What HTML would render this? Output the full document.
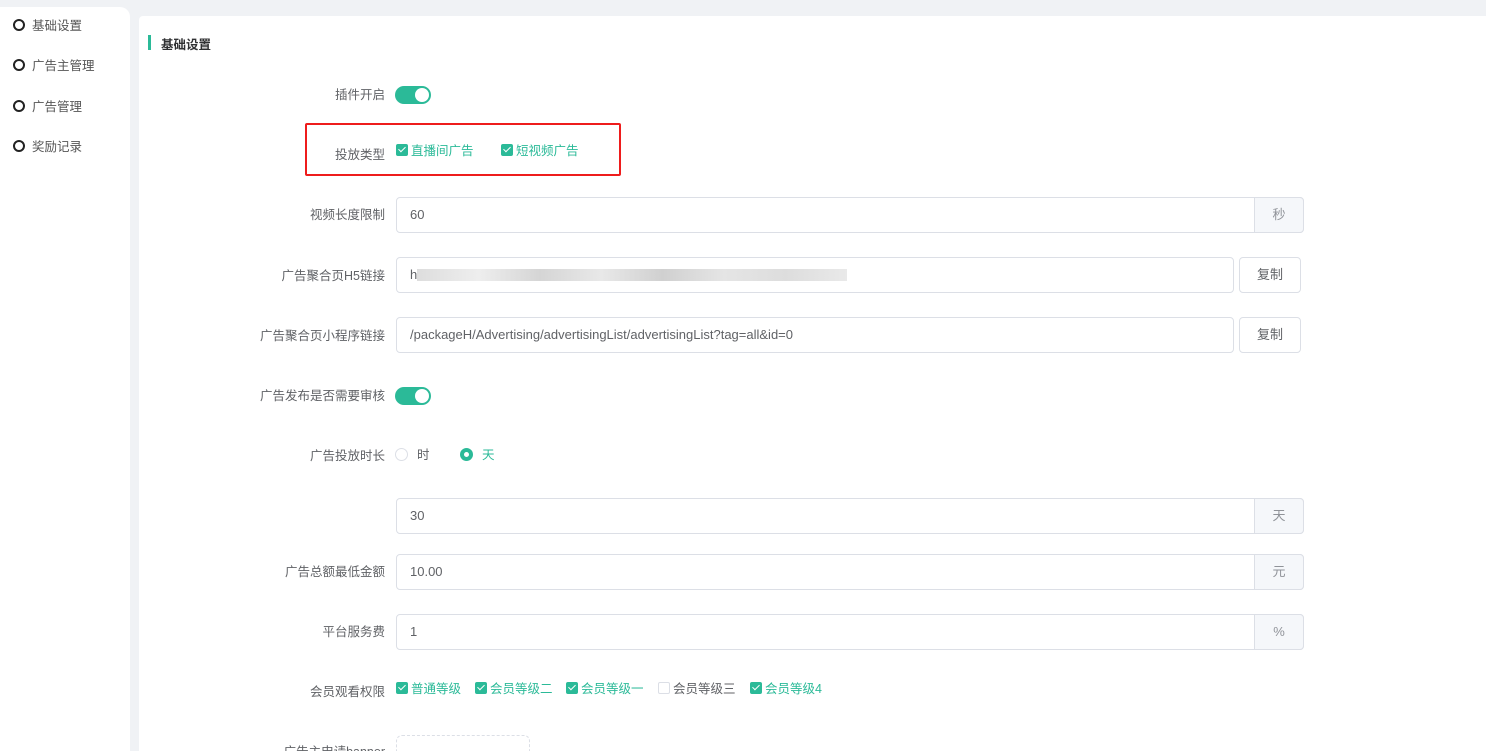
<!DOCTYPE html>
<html style="overflow:hidden;width:1486px;height:751px"><head><meta charset="utf-8"><style>
*{box-sizing:border-box;margin:0;padding:0}
body{width:1486px;height:751px;overflow:hidden;background:#f0f2f5;font-family:"Liberation Sans","Noto Sans CJK SC",sans-serif;font-size:13px;color:#606266;position:relative}
.side{position:absolute;left:0;top:7px;width:130px;height:744px;background:#fff;border-top-right-radius:10px}
.side div{position:absolute;left:13px;color:#555;font-size:12.5px}
.side div:before{content:"";display:inline-block;width:8px;height:8px;border:2px solid #222;border-radius:50%;margin-right:7px;vertical-align:-1px}
.card{position:absolute;left:139px;top:16px;width:1347px;height:735px;background:#fff;border-top-left-radius:4px}
.ab{position:absolute}
.lbl{position:absolute;right:1101px;font-size:12.5px;color:#606266;white-space:nowrap}
.inp{position:absolute;left:396px;height:36px;border:1px solid #dcdfe6;border-radius:4px;padding-left:13px;line-height:34px;color:#606266;font-size:13px}
.app{position:absolute;right:-1px;top:-1px;width:50px;height:36px;background:#f5f7fa;border:1px solid #dcdfe6;border-radius:0 4px 4px 0;text-align:center;line-height:34px;color:#909399}
.btn{position:absolute;left:1239px;width:62px;height:36px;border:1px solid #dcdfe6;border-radius:4px;text-align:center;line-height:34px;color:#606266}
.sw{position:absolute;left:395px;width:36px;height:18px;border-radius:9px;background:#2bba98}
.sw:after{content:"";position:absolute;right:2px;top:2px;width:14px;height:14px;border-radius:50%;background:#fff}
.cb{position:absolute;font-size:12.5px;color:#2bba98;white-space:nowrap}
.cb i{display:inline-block;width:12px;height:12px;background:#2bba98;border-radius:2px;margin-right:3px;vertical-align:-1px;position:relative}
.cb i:after{content:"";position:absolute;left:3.5px;top:1px;width:3px;height:6px;border:solid #fff;border-width:0 1.5px 1.5px 0;transform:rotate(45deg)}
.cb.off{color:#606266}.cb.off i{background:#fff;border:1px solid #dcdfe6}.cb.off i:after{display:none}
</style></head><body>
<div class="side">
<div style="top:8px">基础设置</div>
<div style="top:48px">广告主管理</div>
<div style="top:89px">广告管理</div>
<div style="top:129px">奖励记录</div>
</div>
<div class="card"></div>
<div class="ab" style="left:148px;top:35px;width:3px;height:15px;background:#2bba98"></div>
<div class="ab" style="left:161px;top:34px;font-size:12.5px;font-weight:bold;color:#303133">基础设置</div>

<div class="lbl" style="top:84px">插件开启</div><div class="sw" style="top:86px"></div>

<div class="ab" style="left:305px;top:123px;width:316px;height:53px;border:2px solid #ee1c1c;border-radius:2px"></div>
<div class="lbl" style="top:144px">投放类型</div>
<div class="cb" style="left:396px;top:140px"><i></i>直播间广告</div>
<div class="cb" style="left:501px;top:140px"><i></i>短视频广告</div>

<div class="lbl" style="top:204px">视频长度限制</div>
<div class="inp" style="top:197px;width:908px">60<div class="app">秒</div></div>

<div class="lbl" style="top:265px">广告聚合页H5链接</div>
<div class="inp" style="top:257px;width:838px">h<span class="ab" style="left:20px;top:11px;width:430px;height:12px;background:linear-gradient(90deg,#ddd,#eee,#d5d5d5,#e8e8e8,#d0d0d0,#e5e5e5,#ddd,#e9e9e9)"></span></div>
<div class="btn" style="top:257px">复制</div>

<div class="lbl" style="top:325px">广告聚合页小程序链接</div>
<div class="inp" style="top:317px;width:838px">/packageH/Advertising/advertisingList/advertisingList?tag=all&amp;id=0</div>
<div class="btn" style="top:317px">复制</div>

<div class="lbl" style="top:385px">广告发布是否需要审核</div><div class="sw" style="top:387px"></div>

<div class="lbl" style="top:445px">广告投放时长</div>
<div class="ab" style="left:395px;top:448px;width:13px;height:13px;border:1px solid #dcdfe6;border-radius:50%"></div>
<div class="ab" style="left:417px;top:444px;font-size:12.5px">时</div>
<div class="ab" style="left:460px;top:448px;width:13px;height:13px;border:4px solid #2bba98;border-radius:50%;background:#fff"></div>
<div class="ab" style="left:482px;top:444px;color:#2bba98;font-size:12.5px">天</div>

<div class="inp" style="top:498px;width:908px">30<div class="app">天</div></div>
<div class="lbl" style="top:561px">广告总额最低金额</div>
<div class="inp" style="top:554px;width:908px">10.00<div class="app">元</div></div>
<div class="lbl" style="top:621px">平台服务费</div>
<div class="inp" style="top:614px;width:908px">1<div class="app">%</div></div>

<div class="lbl" style="top:681px">会员观看权限</div>
<div class="cb" style="left:396px;top:678px"><i></i>普通等级</div>
<div class="cb" style="left:475px;top:678px"><i></i>会员等级二</div>
<div class="cb" style="left:566px;top:678px"><i></i>会员等级一</div>
<div class="cb off" style="left:658px;top:678px"><i></i>会员等级三</div>
<div class="cb" style="left:750px;top:678px"><i></i>会员等级4</div>

<div class="lbl" style="top:741px">广告主申请banner</div>
<div class="ab" style="left:396px;top:735px;width:134px;height:16px;border:1px dashed #dcdfe6;border-bottom:none;border-radius:6px 6px 0 0"></div>
</body></html>
